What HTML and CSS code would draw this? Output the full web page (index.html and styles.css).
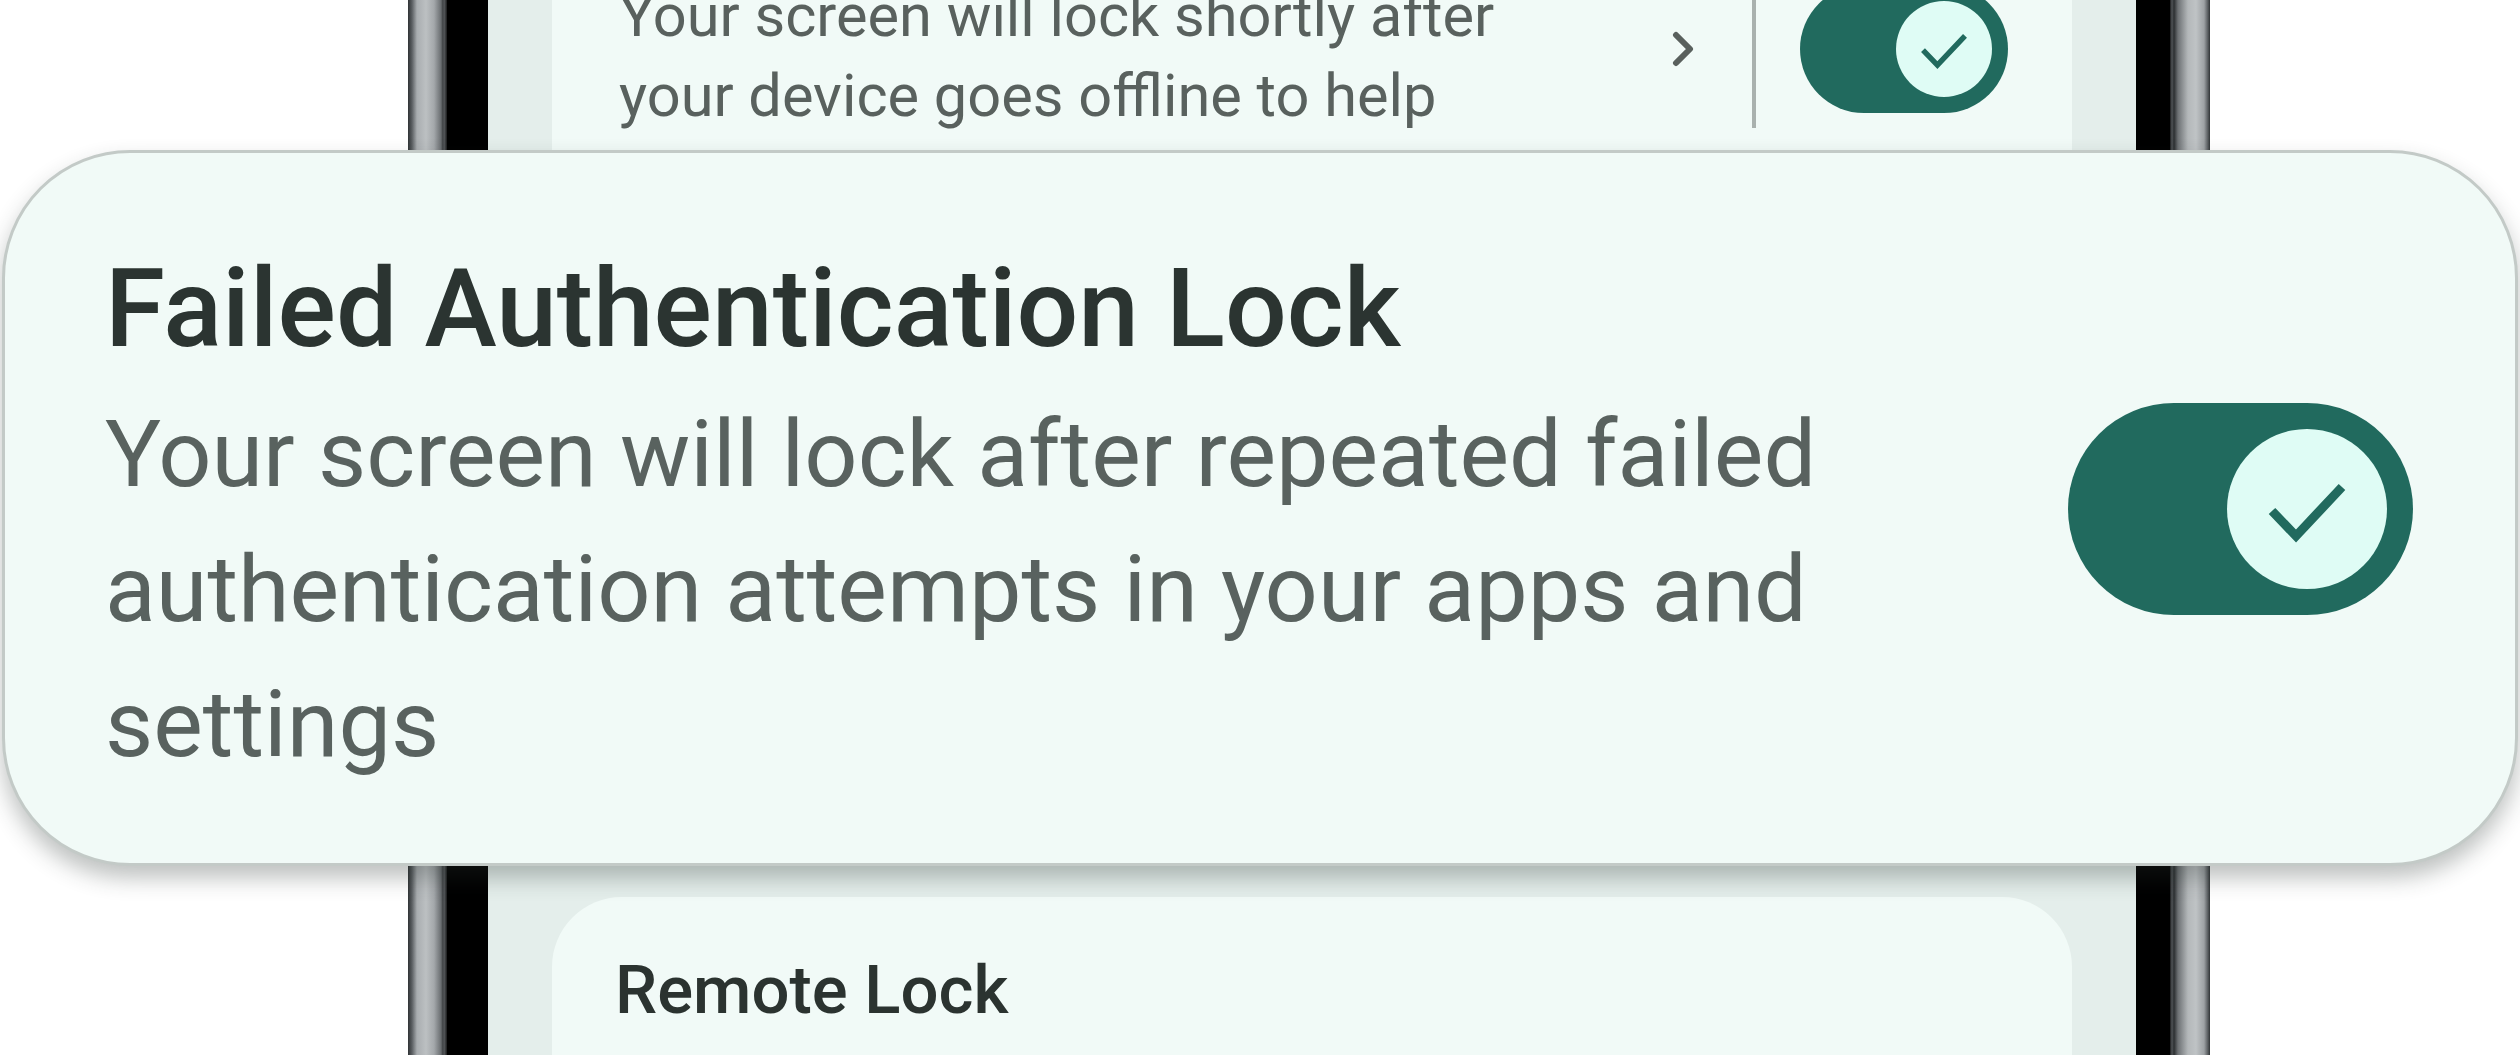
FILE: index.html
```html
<!DOCTYPE html>
<html lang="en">
<head>
<meta charset="utf-8">
<title>Failed Authentication Lock</title>
<link rel="stylesheet" href="styles.css">
</head>
<body>
<div class="stage">
  <div class="phone">
    <div class="rail rail-left"></div>
    <div class="bezel">
      <div class="screen">
        <section class="card card-offline">
          <div class="setting-row">
            <p class="desc">Your screen will lock shortly after your device goes offline to help</p>
            <svg class="chevron" width="22" height="36" viewBox="0 0 22 36" aria-hidden="true">
              <polyline points="4,4 18,18 4,32" fill="none" stroke="#59605d" stroke-width="6" stroke-linecap="round" stroke-linejoin="round"/>
            </svg>
            <span class="divider"></span>
            <div class="toggle toggle-sm">
              <span class="thumb">
                <svg class="check" viewBox="0 0 160 160" aria-hidden="true">
                  <polyline points="45,82 69,107 115,58" fill="none" stroke="#216a5e" stroke-width="9"/>
                </svg>
              </span>
            </div>
          </div>
        </section>
        <section class="card card-remote">
          <h3 class="card-title">Remote Lock</h3>
        </section>
      </div>
    </div>
    <div class="rail rail-right"></div>
  </div>

  <div class="popup">
    <div class="popup-text">
      <h2 class="popup-title">Failed Authentication Lock</h2>
      <p class="popup-body">Your screen will lock after repeated failed authentication attempts in your apps and settings</p>
    </div>
    <div class="toggle toggle-lg">
      <span class="thumb">
        <svg class="check" viewBox="0 0 160 160" aria-hidden="true">
          <polyline points="45,82 69,107 115,58" fill="none" stroke="#216a5e" stroke-width="9"/>
        </svg>
      </span>
    </div>
  </div>
</div>
</body>
</html>
```

FILE: styles.css
```css
* {
  box-sizing: border-box;
}

html, body {
  margin: 0;
  padding: 0;
  background: #ffffff;
}

body {
  font-family: "Roboto", "Noto Sans", sans-serif;
}

.stage {
  position: relative;
  width: 2520px;
  height: 1055px;
  overflow: hidden;
  background: #ffffff;
}

/* ---------- phone ---------- */
.phone {
  display: flex;
  width: 1802px;
  height: 1500px;
  margin: -240px 0 0 408px;
}

.rail {
  flex: none;
  height: 100%;
}

.rail-left {
  width: 39px;
  background: linear-gradient(90deg,
    #2f3335 0px, #5b5f62 4px, #a9adb0 9px, #bcc0c2 18px,
    #a4a8ab 26px, #6a6e71 33px, #3a3d3f 35px, #5a5d60 36px, #1a1b1c 39px);
}

.rail-right {
  width: 40px;
  background: linear-gradient(90deg,
    #1a1b1c 0px, #505457 2px, #2c2f31 4px, #6d7174 8px, #b4b8ba 18px,
    #bfc3c5 26px, #9ea2a5 34px, #575b5e 38px, #2f3335 40px);
}

.bezel {
  flex: 1;
  height: 100%;
  background: #000000;
  padding: 0 34px 0 41px;
}

.screen {
  height: 100%;
  background: #e4eeeb;
  padding: 0 64px;
  display: flex;
  flex-direction: column;
  gap: 37px;
}

.card {
  background: #f1faf7;
  border-radius: 70px;
}

.card-offline {
  flex: none;
  height: 1100px;
  padding: 200px 64px 0 67px;
}

.setting-row {
  display: flex;
  align-items: flex-start;
}

.desc {
  width: 960px;
  margin: 16px auto 0 0;
  font-size: 59.5px;
  line-height: 80px;
  color: #59615e;
}

.chevron {
  flex: none;
  margin: 71px 58px 0 0;
}

.divider {
  flex: none;
  width: 4px;
  height: 168px;
  background: #a9b1ae;
  margin-right: 44px;
}

.card-remote {
  flex: 1;
  border-radius: 70px 70px 0 0;
  padding: 54px 64px 0 63px;
}

.card-title {
  margin: 0;
  font-size: 67px;
  line-height: 79px;
  font-weight: 500;
  color: #2b3330;
}

/* ---------- toggles ---------- */
.toggle {
  flex: none;
  display: flex;
  align-items: center;
  justify-content: flex-end;
  background: #216a5e;
}

.thumb {
  display: flex;
  border-radius: 50%;
  background: #dffcf5;
}

.check {
  width: 100%;
  height: 100%;
}

.toggle-sm {
  width: 208px;
  height: 128px;
  border-radius: 64px;
  padding-right: 16px;
  margin-top: 25px;
}

.toggle-sm .thumb {
  width: 96px;
  height: 96px;
}

.toggle-lg {
  width: 345px;
  height: 212px;
  border-radius: 106px;
  padding-right: 26px;
  margin-top: 158px;
}

.toggle-lg .thumb {
  width: 160px;
  height: 160px;
}

/* ---------- popup overlay ---------- */
.popup {
  position: absolute;
  left: 2px;
  top: 150px;
  width: 2516px;
  height: 716px;
  border: 3px solid #c3cac7;
  border-radius: 128px;
  background: #f1faf7;
  box-shadow: 0 12px 22px rgba(40, 50, 48, 0.30);
  display: flex;
  align-items: flex-start;
  justify-content: space-between;
  padding: 92px 102px 0 100px;
}

.popup-text {
  width: 1820px;
}

.popup-title {
  margin: 0;
  font-size: 109px;
  line-height: 129px;
  font-weight: 500;
  color: #2b3431;
}

.popup-body {
  margin: 12.5px 0 0;
  font-size: 93.5px;
  line-height: 135px;
  color: #59625f;
}
```
